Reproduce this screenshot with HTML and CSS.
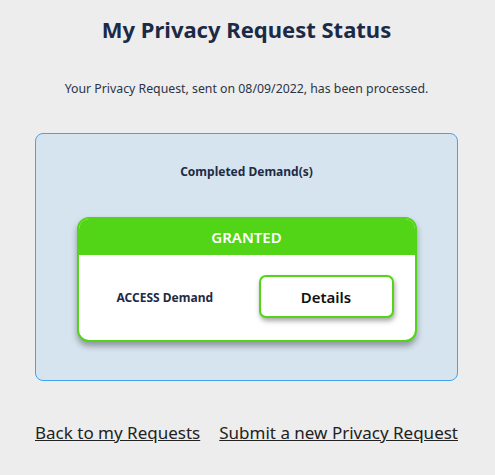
FILE: index.html
```html
<!DOCTYPE html>
<html>
<head>
<meta charset="utf-8">
<link rel="stylesheet" href="styles.css">
</head>
<body>
<main class="page">
  <h1 class="title">My Privacy Request Status</h1>
  <p class="intro">Your Privacy Request, sent on 08/09/2022, has been processed.</p>
  <section class="panel">
    <h2 class="panel-title">Completed Demand(s)</h2>
    <div class="card">
      <div class="card-head">GRANTED</div>
      <div class="card-body">
        <span class="demand">ACCESS Demand</span>
        <button class="details">Details</button>
      </div>
    </div>
  </section>
  <nav class="links">
    <a href="#" class="link">Back to my Requests</a>
    <a href="#" class="link">Submit a new Privacy Request</a>
  </nav>
</main>
</body>
</html>
```
FILE: styles.css
```css
html, body {
  margin: 0;
  padding: 0;
  background: #ededed;
}
body {
  font-family: "Noto Sans", "Open Sans", sans-serif;
  color: #1d2a44;
}
.page {
  width: 423px;
  margin: 0 0 0 35px;
  padding-top: 14px;
  display: flex;
  flex-direction: column;
  align-items: stretch;
}
.title {
  margin: 0;
  text-align: center;
  font-size: 22px;
  font-weight: 700;
  color: #1b2a46;
  line-height: 30px;
}
.intro {
  margin: 36px 0 0;
  text-align: center;
  font-size: 12.3px;
  line-height: 17px;
  color: #2b3447;
}
.panel {
  margin-top: 36px;
  height: 246px;
  background: #d6e4ef;
  border: 1px solid #42a3ef;
  border-radius: 8px;
  display: flex;
  flex-direction: column;
  align-items: center;
}
.panel-title {
  margin: 29px 0 0;
  font-size: 12px;
  font-weight: 700;
  line-height: 17px;
  color: #1f2b44;
}
.card {
  margin-top: 37px;
  width: 336px;
  height: 121px;
  border: 2px solid #52d417;
  border-radius: 12px;
  background: #fff;
  overflow: hidden;
  box-shadow: 0 4px 6px rgba(0,0,0,0.35);
  display: flex;
  flex-direction: column;
}
.card-head {
  background: #52d417;
  color: #fff;
  text-align: center;
  font-size: 15px;
  font-weight: 600;
  height: 36px;
  line-height: 37px;
}
.card-body {
  flex: 1;
  display: flex;
  align-items: center;
  padding-left: 38px;
}
.demand {
  font-size: 12px;
  font-weight: 700;
  color: #1f2b44;
  width: 142px;
}
.details {
  width: 135px;
  height: 43px;
  border: 2px solid #52d417;
  border-radius: 7px;
  background: #fff;
  font-family: inherit;
  font-size: 15px;
  font-weight: 600;
  color: #111;
  box-shadow: 1px 3px 5px rgba(0,0,0,0.35);
  margin-top: -2px;
}
.links {
  margin-top: 40px;
  display: flex;
  justify-content: space-between;
}
.link {
  font-size: 17px;
  color: #222;
  text-decoration: underline;
}
```
